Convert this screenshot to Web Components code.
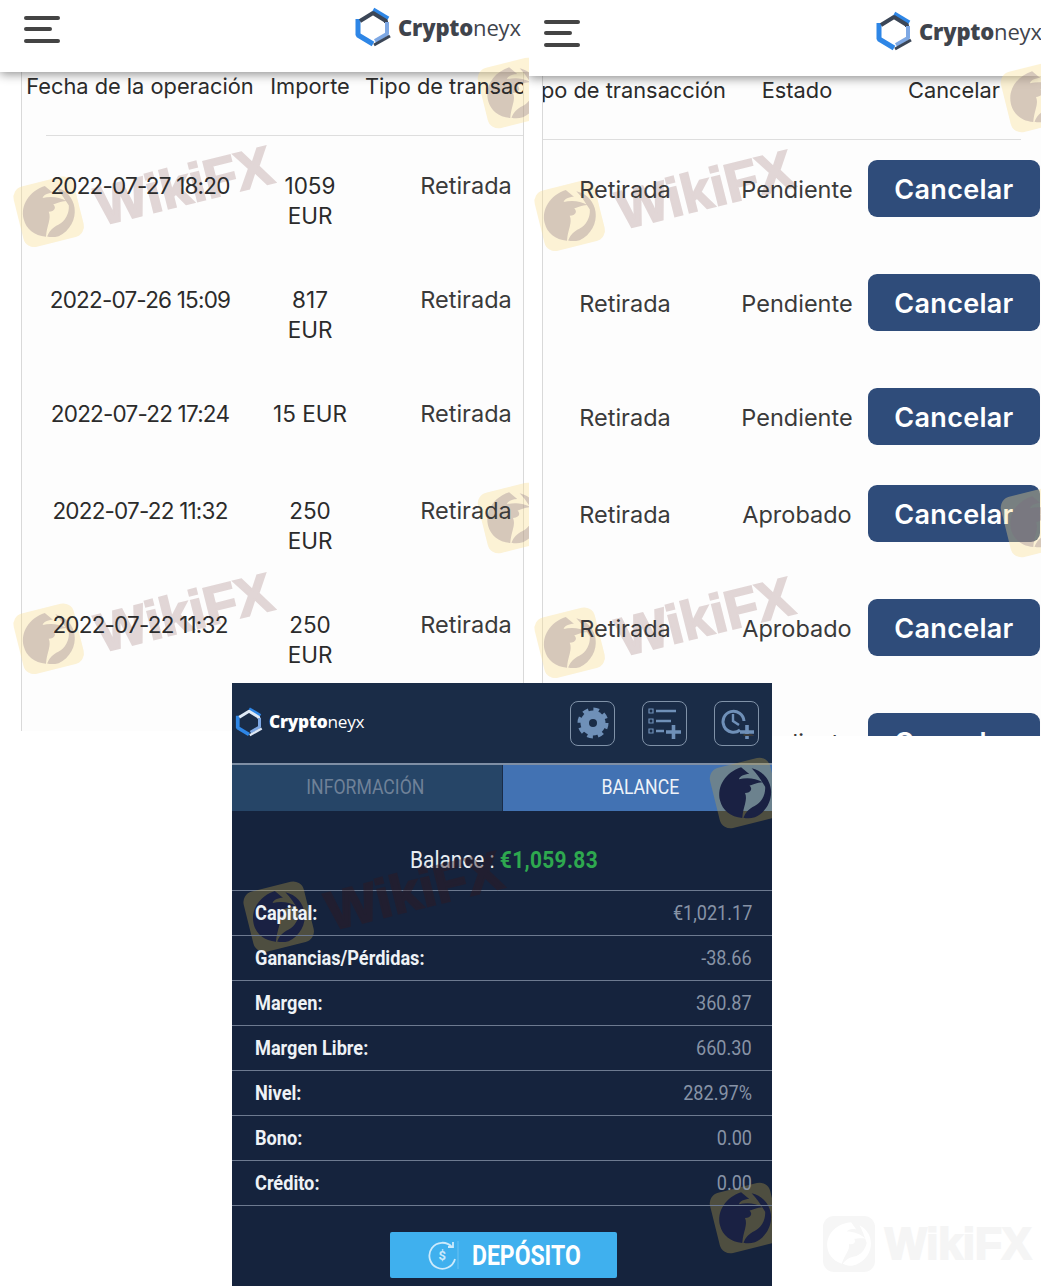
<!DOCTYPE html>
<html lang="es">
<head>
<meta charset="utf-8">
<title>Cryptoneyx</title>
<style>
  html, body { margin: 0; background: #fff; }
  body { width: 1041px; height: 1286px; overflow: hidden; font-family: "Inter", "Liberation Sans", sans-serif; position: relative; }
  .top { display: flex; align-items: flex-start; }
  .bottom { margin: -53px 0 0 232px; position: relative; width: 540px; }
</style>
</head>
<body>
<div class="top">
  <tx-screen style="--w:529px;--h:731px;--bar:72px;--bar-top:0px;--burger-l:24px;--view-l:21px;--view-w:501px;--view-edge:1px;--cols:236px 104px 208px;--shift:0px;--rule-l:24px;--rule-r:0px;--logo-l:353px">
    <tx-row head>
      <tx-cell>Fecha de la operación</tx-cell><tx-cell>Importe</tx-cell><tx-cell style="text-align:left;padding-left:3px">Tipo de transac</tx-cell>
    </tx-row>
    <tx-row slot="rows" tall><tx-cell date>2022-07-27 18:20</tx-cell><tx-cell>1059<br>EUR</tx-cell><tx-cell word>Retirada</tx-cell></tx-row>
    <tx-row slot="rows" tall><tx-cell date>2022-07-26 15:09</tx-cell><tx-cell>817<br>EUR</tx-cell><tx-cell word>Retirada</tx-cell></tx-row>
    <tx-row slot="rows"><tx-cell date>2022-07-22 17:24</tx-cell><tx-cell>15 EUR</tx-cell><tx-cell word>Retirada</tx-cell></tx-row>
    <tx-row slot="rows" tall><tx-cell date>2022-07-22 11:32</tx-cell><tx-cell>250<br>EUR</tx-cell><tx-cell word>Retirada</tx-cell></tx-row>
    <tx-row slot="rows" tall><tx-cell date>2022-07-22 11:32</tx-cell><tx-cell>250<br>EUR</tx-cell><tx-cell word>Retirada</tx-cell></tx-row>
    <wiki-mark slot="marks" text style="left:16px;top:174px"></wiki-mark>
    <wiki-mark slot="marks" text style="left:16px;top:601px"></wiki-mark>
    <wiki-mark slot="marks" style="left:482px;top:62px"></wiki-mark>
    <wiki-mark slot="marks" style="left:482px;top:487px"></wiki-mark>
  </tx-screen>
  <tx-screen style="--w:512px;--h:736px;--bar:76px;--bar-top:4px;--burger-l:15px;--view-l:13px;--view-w:498px;--view-edge:0px;--cols:208px 136px 178px;--shift:-22px;--rule-l:0px;--rule-r:20px;--logo-l:345px">
    <tx-row head>
      <tx-cell style="text-align:right;padding-right:3px">po de transacción</tx-cell><tx-cell>Estado</tx-cell><tx-cell>Cancelar</tx-cell>
    </tx-row>
    <tx-row slot="rows" tall><tx-cell word>Retirada</tx-cell><tx-cell word>Pendiente</tx-cell><cancel-btn>Cancelar</cancel-btn></tx-row>
    <tx-row slot="rows" tall><tx-cell word>Retirada</tx-cell><tx-cell word>Pendiente</tx-cell><cancel-btn>Cancelar</cancel-btn></tx-row>
    <tx-row slot="rows"><tx-cell word>Retirada</tx-cell><tx-cell word>Pendiente</tx-cell><cancel-btn>Cancelar</cancel-btn></tx-row>
    <tx-row slot="rows" tall><tx-cell word>Retirada</tx-cell><tx-cell word>Aprobado</tx-cell><cancel-btn>Cancelar</cancel-btn></tx-row>
    <tx-row slot="rows" tall><tx-cell word>Retirada</tx-cell><tx-cell word>Aprobado</tx-cell><cancel-btn>Cancelar</cancel-btn></tx-row>
    <tx-row slot="rows" tall><tx-cell></tx-cell><tx-cell word>Pendiente</tx-cell><cancel-btn>Cancelar</cancel-btn></tx-row>
    <wiki-mark slot="marks" text style="left:8px;top:178px"></wiki-mark>
    <wiki-mark slot="marks" text style="left:8px;top:605px"></wiki-mark>
    <wiki-mark slot="marks" style="left:476px;top:66px"></wiki-mark>
    <wiki-mark slot="marks" style="left:476px;top:491px"></wiki-mark>
  </tx-screen>
</div>
<div class="bottom">
  <balance-screen>
    <balance-row label="Capital:" value="€1,021.17"></balance-row>
    <balance-row label="Ganancias/Pérdidas:" value="-38.66"></balance-row>
    <balance-row label="Margen:" value="360.87"></balance-row>
    <balance-row label="Margen Libre:" value="660.30"></balance-row>
    <balance-row label="Nivel:" value="282.97%"></balance-row>
    <balance-row label="Bono:" value="0.00"></balance-row>
    <balance-row label="Crédito:" value="0.00"></balance-row>
    <wiki-mark slot="marks" dark text style="left:14px;top:196px"></wiki-mark>
    <wiki-mark slot="marks" dark style="left:482px;top:79px"></wiki-mark>
    <wiki-mark slot="marks" dark style="left:482px;top:504px"></wiki-mark>
  </balance-screen>
</div>
<wiki-mark text faint style="left:823px;top:1213px"></wiki-mark>

<script>
// hexagon logo, --dk is the dark band so it can go light on the navy header
class BrandLogo extends HTMLElement {
  connectedCallback() {
    const size = this.getAttribute('size') || 22;
    const w = this.getAttribute('hex') || 40;
    this.attachShadow({ mode: 'open' }).innerHTML = `
      <style>
        :host { display: inline-flex; align-items: center; gap: 5px; color: var(--ink, #3f444c); }
        svg { display: block; flex: none; }
        span { font: 700 ${size}px/1 "Open Sans", "Liberation Sans", sans-serif; letter-spacing: -.2px; white-space: nowrap; }
        b { font-weight: 800; }
        i { font-style: normal; font-weight: 400; }
      </style>
      <svg width="${w}" height="${w * 1.05}" viewBox="0 0 40 42" fill="none" stroke-linejoin="bevel">
        <path d="M5 13V29L20 38" stroke="#2e86e6" stroke-width="5"/>
        <path d="M20 4L35 13" stroke="#2e86e6" stroke-width="5"/>
        <path d="M7 15L20 7L33 15V17" stroke="var(--dk, #3b4657)" stroke-width="4"/>
        <path d="M34 16V28L22 35" stroke="var(--lt, #7ea8e4)" stroke-width="4"/>
        <path d="M37 30L21 39" stroke="var(--dk, #3b4657)" stroke-width="3"/>
      </svg>
      <span><b>Crypto</b><i>neyx</i></span>`;
  }
}

class WikiMark extends HTMLElement {
  connectedCallback() {
    const word = this.hasAttribute('text') ? '<em>WikiFX</em>' : '';
    this.attachShadow({ mode: 'open' }).innerHTML = `
      <style>
        :host { position: absolute; display: block; z-index: 5; pointer-events: none; --sq: rgba(250,222,140,.36); --bird: rgba(126,104,126,.3); --word: #8c5c5c; --word-a: .24; --rot: -14deg; --fs: 54px; --gap: 17px; --drop: 14px; }
        :host([dark]) { --sq: rgba(190,160,70,.34); --bird: #1a2143; --word: #32191f; --word-a: .42; }
        :host([faint]) { --sq: #f6f6f6; --bird: #fff; --word: #f5f5f5; --word-a: 1; --rot: 0deg; --fs: 44px; --gap: 10px; --drop: 0px; }
        div { display: flex; align-items: center; gap: var(--gap); transform: rotate(var(--rot)); transform-origin: 31px 31px; white-space: nowrap; }
        svg { display: block; flex: none; background: var(--sq); border-radius: 11px; }
        :host([faint]) svg { width: 52px; height: 56px; }
        em { font: 700 var(--fs)/62px "Liberation Sans", sans-serif; color: var(--word); -webkit-text-stroke: 2px var(--word); opacity: var(--word-a); font-style: normal; margin-top: var(--drop); }
      </style>
      <div>
        <svg width="62" height="62" viewBox="6 6 50 50" fill="var(--bird)">
          <path d="M10 32C10 20 20 11 33 10L38 17C34 16 30 17 29 19C35 19 42 21 47 26C42 25 39 26 36 26C38 29 36 32 31 31C32 37 27 41 24 50C15 47 10 40 10 32Z"/>
          <path d="M41 13C49 17 53 25 52 33C51 42 44 50 34 52C30 52 27 51 25 50C28 46 31 44 36 43C42 42 47 36 48 30C46 24 44 18 41 13Z"/>
        </svg>
        ${word}
      </div>`;
  }
}

class TxCell extends HTMLElement {
  constructor() {
    super();
    this.attachShadow({ mode: 'open' }).innerHTML = `
      <style>
        :host { display: block; position: relative; z-index: 6; text-align: center; white-space: nowrap; font-size: var(--cell-fs, 22.5px); line-height: var(--cell-lh, 30px); padding-top: var(--cell-top, 35px); color: #2b2b2b; }
        :host([date]) { letter-spacing: -.8px; }
        :host([word]) { font-size: 23.500px; color: #3a3a3a; }
      </style>
      <slot></slot>`;
  }
}

class CancelBtn extends HTMLElement {
  constructor() {
    super();
    this.attachShadow({ mode: 'open' }).innerHTML = `
      <style>
        :host { display: flex; align-items: center; justify-content: center; box-sizing: border-box; width: 172px; height: 57px; margin: 20px 0 0 3px; padding-top: 1px; border-radius: 9px; background: #2f4c7a; color: #fff; font-size: 27px; font-weight: 600; letter-spacing: .3px; }
      </style>
      <slot></slot>`;
  }
}

class TxRow extends HTMLElement {
  constructor() {
    super();
    this.attachShadow({ mode: 'open' }).innerHTML = `
      <style>
        :host { display: grid; grid-template-columns: var(--cols); align-items: start; height: 97px; }
        :host([tall]) { height: 114px; }
        :host([head]) { height: 63px; --cell-top: 0px; --cell-lh: 28px; --cell-fs: 21.8px; }
      </style>
      <slot></slot>`;
  }
}

class TxScreen extends HTMLElement {
  constructor() {
    super();
    this.attachShadow({ mode: 'open' }).innerHTML = `
      <style>
        :host { display: block; flex: none; position: relative; overflow: hidden; width: var(--w); height: var(--h); background: #fff; }
        .bar { position: relative; z-index: 4; box-sizing: border-box; height: var(--bar); padding-top: var(--bar-top); background: #fff; box-shadow: 0 2px 10px rgba(0,0,0,.45); display: flex; align-items: flex-start; }
        .burger { display: flex; flex-direction: column; gap: 7.500px; margin: 15.500px 0 0 var(--burger-l); }
        .burger i { display: block; width: 36px; height: 4px; border-radius: 2px; background: #444; }
        .burger i:nth-child(2) { width: 28px; }
        brand-logo { position: absolute; left: var(--logo-l); top: calc(var(--bar-top) + 6px); }
        .view { margin-left: var(--view-l); width: var(--view-w); height: calc(var(--h) - var(--bar)); overflow: hidden; background: #fdfdfd; border-left: 1px solid #d9d9d9; border-right: var(--view-edge) solid #d9d9d9; }
        .sheet { margin-left: var(--shift); width: 700px; }
        .rule { height: 1px; background: #dedede; margin: 0 var(--rule-r) 0 var(--rule-l); }
      </style>
      <div class="bar">
        <div class="burger"><i></i><i></i><i></i></div>
        <brand-logo></brand-logo>
      </div>
      <div class="view">
        <div class="sheet"><slot></slot></div>
        <div class="rule"></div>
        <div class="sheet"><slot name="rows"></slot></div>
      </div>
      <slot name="marks"></slot>`;
  }
}

class BalanceRow extends HTMLElement {
  connectedCallback() {
    this.attachShadow({ mode: 'open' }).innerHTML = `
      <style>
        :host { display: flex; position: relative; z-index: 6; justify-content: space-between; align-items: center; box-sizing: border-box; height: 45px; padding: 0 20px 0 23px; border-bottom: 1px solid #6d7a90; font-family: Roboto, "Liberation Sans", sans-serif; font-size: 21px; }
        b { display: inline-block; color: #eef2f6; font-weight: 700; transform: scaleX(.865); transform-origin: left center; white-space: nowrap; }
        span { display: inline-block; color: #8793a6; transform: scaleX(.86); transform-origin: right center; white-space: nowrap; }
      </style>
      <b>${this.getAttribute('label')}</b><span>${this.getAttribute('value')}</span>`;
  }
}

class BalanceScreen extends HTMLElement {
  constructor() {
    super();
    this.attachShadow({ mode: 'open' }).innerHTML = `
      <style>
        :host { display: block; position: relative; overflow: hidden; width: 540px; height: 603px; background: #15233d; font-family: Roboto, "Liberation Sans", sans-serif; --dk: #dfe9f5; --lt: #7ea8e4; --ink: #fff; }
        header { display: flex; align-items: center; gap: 27px; height: 80px; background: #1a2c47; padding-right: 13px; box-sizing: border-box; }
        header brand-logo { margin: -2px auto 0 2px; }
        .tool { display: flex; align-items: center; justify-content: center; box-sizing: border-box; width: 45px; height: 45px; border: 1px solid #8092a8; border-radius: 8px; }
        .tabs { display: grid; grid-template-columns: 271px 1fr; height: 48px; border-top: 2px solid #7f8fa5; box-sizing: border-box; font-size: 21px; }
        .tabs div { display: flex; align-items: center; justify-content: center; background: #264567; color: #6f8198; border-right: 1px solid #1a2c47; padding-bottom: 2px; padding-right: 4px; }
        .tabs div + div { background: #4272b3; color: #eef3f9; border: 0; padding-right: 0; padding-left: 6px; }
        .tabs span { display: inline-block; transform: scaleX(.84); white-space: nowrap; }
        .total { display: flex; align-items: flex-end; justify-content: center; box-sizing: border-box; height: 80px; padding: 0 0 16px 4px; border-bottom: 1px solid #6d7a90; font-size: 24px; color: #e8edf2; }
        .total span { display: inline-block; transform: scaleX(.87); white-space: nowrap; }
        .total b { color: #2ea84f; letter-spacing: .4px; }
        .dep { display: flex; align-items: center; gap: 13px; box-sizing: border-box; width: 227px; height: 46px; margin: 26px 0 0 158px; padding-left: 37px; border-radius: 2px; background: #3fb0ee; color: #fff; font-size: 28px; font-weight: 700; }
        .dep svg { display: block; flex: none; }
        .dep span { display: inline-block; transform: scaleX(.82); transform-origin: left center; white-space: nowrap; }
      </style>
      <header>
        <brand-logo size="17.2" hex="30"></brand-logo>
        <div class="tool">
          <svg width="32" height="32" viewBox="0 0 32 32"><circle cx="16" cy="16" r="12.500" fill="#6f90b8"/><circle cx="16" cy="16" r="13.500" fill="none" stroke="#6f90b8" stroke-width="4" stroke-dasharray="5.600 5"/><circle cx="16" cy="16" r="4" fill="#1a2c47"/></svg>
        </div>
        <div class="tool">
          <svg width="36" height="34" viewBox="0 0 36 34" fill="none" stroke="#6f90b8"><path d="M2 3h4v4H2zM2 13h4v4H2zM2 23h4v4H2z" stroke-width="1.200"/><path d="M9 5h20M9 15h15M9 25h8" stroke-width="2.600"/><path d="M19 26h15M26.500 19v14" stroke-width="3.600"/></svg>
        </div>
        <div class="tool">
          <svg width="36" height="34" viewBox="0 0 36 34" fill="none" stroke="#6f90b8"><path d="M21 24A10.500 10.500 0 1 1 25 15" stroke-width="3"/><path d="M14 8v7l6 4" stroke-width="2.400"/><path d="M21 26h14M28 19v14" stroke-width="3.600"/></svg>
        </div>
      </header>
      <div class="tabs"><div><span>INFORMACIÓN</span></div><div><span>BALANCE</span></div></div>
      <div class="total"><span>Balance : <b>€1,059.83</b></span></div>
      <slot></slot>
      <div class="dep">
        <svg width="32" height="32" viewBox="0 0 32 32" fill="none" stroke="#cdeafb" stroke-width="1.800"><path d="M25 8A13 13 0 1 0 28 20"/><path d="M21 8h5V3"/><text x="11.500" y="21" font-family="Roboto, sans-serif" font-size="13" font-weight="700" fill="#cdeafb" stroke="none">$</text><path d="M31 2V30" stroke="#6cc2f2" stroke-width="1"/></svg>
        <span>DEPÓSITO</span>
      </div>
      <slot name="marks"></slot>`;
  }
}

customElements.define('brand-logo', BrandLogo);
customElements.define('wiki-mark', WikiMark);
customElements.define('tx-cell', TxCell);
customElements.define('cancel-btn', CancelBtn);
customElements.define('tx-row', TxRow);
customElements.define('tx-screen', TxScreen);
customElements.define('balance-row', BalanceRow);
customElements.define('balance-screen', BalanceScreen);
</script>
</body>
</html>
